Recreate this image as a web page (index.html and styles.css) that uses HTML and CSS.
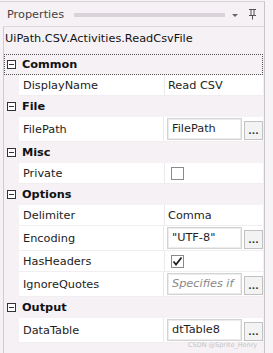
FILE: index.html
```html
<!DOCTYPE html>
<html lang="en">
<head>
  <meta charset="UTF-8">
  <title>Properties</title>
  <link rel="stylesheet" href="styles.css">
</head>
<body>
  <div class="panel">
    <div class="titlebar">
      <span class="title">Properties</span>
      <span class="grip"></span>
      <span class="arrow"></span>
      <svg class="pin" width="9" height="12" viewBox="0 0 9 12">
        <path d="M1 1.5h7M3 1.5v5.5M6 1.5v5.5M1 7.5h7M4.5 7.5v4" stroke="#555" stroke-width="1" fill="none"/>
      </svg>
    </div>

    <div class="inner">
      <div class="objname">UiPath.CSV.Activities.ReadCsvFile</div>

      <div class="grid">
        <!-- Common -->
        <div class="cat focused"><span class="exp"></span>Common</div>
        <div class="prop">
          <div class="name">DisplayName</div>
          <div class="val">Read CSV</div>
        </div>

        <!-- File -->
        <div class="cat"><span class="exp"></span>File</div>
        <div class="prop tall">
          <div class="name">FilePath</div>
          <div class="val"><span class="box">FilePath</span><span class="dots">...</span></div>
        </div>

        <!-- Misc -->
        <div class="cat"><span class="exp"></span>Misc</div>
        <div class="prop">
          <div class="name">Private</div>
          <div class="val"><span class="chk"></span></div>
        </div>

        <!-- Options -->
        <div class="cat"><span class="exp"></span>Options</div>
        <div class="prop">
          <div class="name">Delimiter</div>
          <div class="val">Comma</div>
        </div>
        <div class="prop tall">
          <div class="name">Encoding</div>
          <div class="val"><span class="box">"UTF-8"</span><span class="dots">...</span></div>
        </div>
        <div class="prop">
          <div class="name">HasHeaders</div>
          <div class="val">
            <span class="chk">
              <svg width="11" height="11" viewBox="0 0 11 11"><path d="M1.5 5.5l2.5 3 5.5-7" stroke="#222" stroke-width="1.8" fill="none"/></svg>
            </span>
          </div>
        </div>
        <div class="prop tall">
          <div class="name">IgnoreQuotes</div>
          <div class="val"><span class="box hint">Specifies if</span><span class="dots">...</span></div>
        </div>

        <!-- Output -->
        <div class="cat"><span class="exp"></span>Output</div>
        <div class="prop tall">
          <div class="name">DataTable</div>
          <div class="val"><span class="box">dtTable8</span><span class="dots">...</span></div>
        </div>
      </div>
      <div class="mark">CSDN @Sprite_Henry</div>
    </div>
  </div>
</body>
</html>
```

FILE: styles.css
```css
body { margin: 0; padding-top: 1px; background: #f7f4f7; font-family: 'DejaVu Sans', 'Noto Sans', sans-serif; font-size: 11.3px; color: #1e1e1e; }
.panel { width: 265px; height: 352px; border-top: 1px solid #d6d2d6; border-right: 1px solid #c8c4c8; background: #f5f1f5; box-sizing: border-box; overflow: hidden; }

.titlebar { height: 24px; display: flex; align-items: center; padding: 0 7px 0 7px; }
.title { color: #444; }
.grip { flex: 1; height: 4px; margin: 1px 6px 0 10px; background-image: radial-gradient(circle, #b8b2b8 0.6px, transparent 0.8px); background-size: 2px 2px; }
.arrow { width: 0; height: 0; border-left: 3px solid transparent; border-right: 3px solid transparent; border-top: 3px solid #666; margin: 3px 10px 0 1px; }
.pin { margin-top: -1px; }

.inner { margin-left: 3px; border-left: 1px solid #cfcbcf; border-top: 1px solid #dcd8dc; height: 330px; position: relative; }
.objname { height: 27px; line-height: 24px; padding-left: 1px; color: #111; }

.grid { margin-right: 1px; }
.cat { height: 21px; display: flex; align-items: center; font-weight: bold; color: #111; box-sizing: border-box; }
.cat.focused { border: 1px dotted #555; }
.exp { width: 7px; height: 7px; border: 1px solid #333; margin: 0 6px 0 3px; position: relative; background: #fff; }
.cat.focused .exp { margin-left: 2px; }
.exp::after { content: ""; position: absolute; left: 1px; top: 3px; width: 5px; height: 1px; background: #333; }

.prop { display: flex; height: 21px; margin-left: 15px; background: #fff; border-bottom: 1px solid #f0eef0; box-sizing: border-box; }
.prop.tall { height: 25px; }
.name { width: 146px; padding-left: 4px; border-right: 1px solid #ece9ec; box-sizing: border-box; display: flex; align-items: center; color: #222; }
.val { flex: 1; display: flex; align-items: center; padding-left: 3px; }
.prop.tall .val { align-items: flex-end; padding-bottom: 1px; }

.box { width: 75px; height: 22px; border: 1px solid #d4d4d4; box-shadow: inset 0 0 0 1px #ececec; box-sizing: border-box; padding-left: 4px; line-height: 20px; overflow: hidden; white-space: nowrap; }
.box.hint { color: #888; font-style: italic; }
.dots { width: 19px; height: 19px; margin-left: 2px; border: 1px solid #c2c2c2; background: #f3f3f3; box-sizing: border-box; font-size: 9px; line-height: 18px; text-align: center; font-weight: bold; color: #333; }

.chk { width: 13px; height: 13px; border: 1px solid #8a8a8a; background: #fff; box-sizing: border-box; margin-left: 3px; display: flex; align-items: center; justify-content: center; }

.mark { position: absolute; left: 184px; top: 314px; font-size: 6.5px; color: #c4c4c4; white-space: nowrap; }
```
